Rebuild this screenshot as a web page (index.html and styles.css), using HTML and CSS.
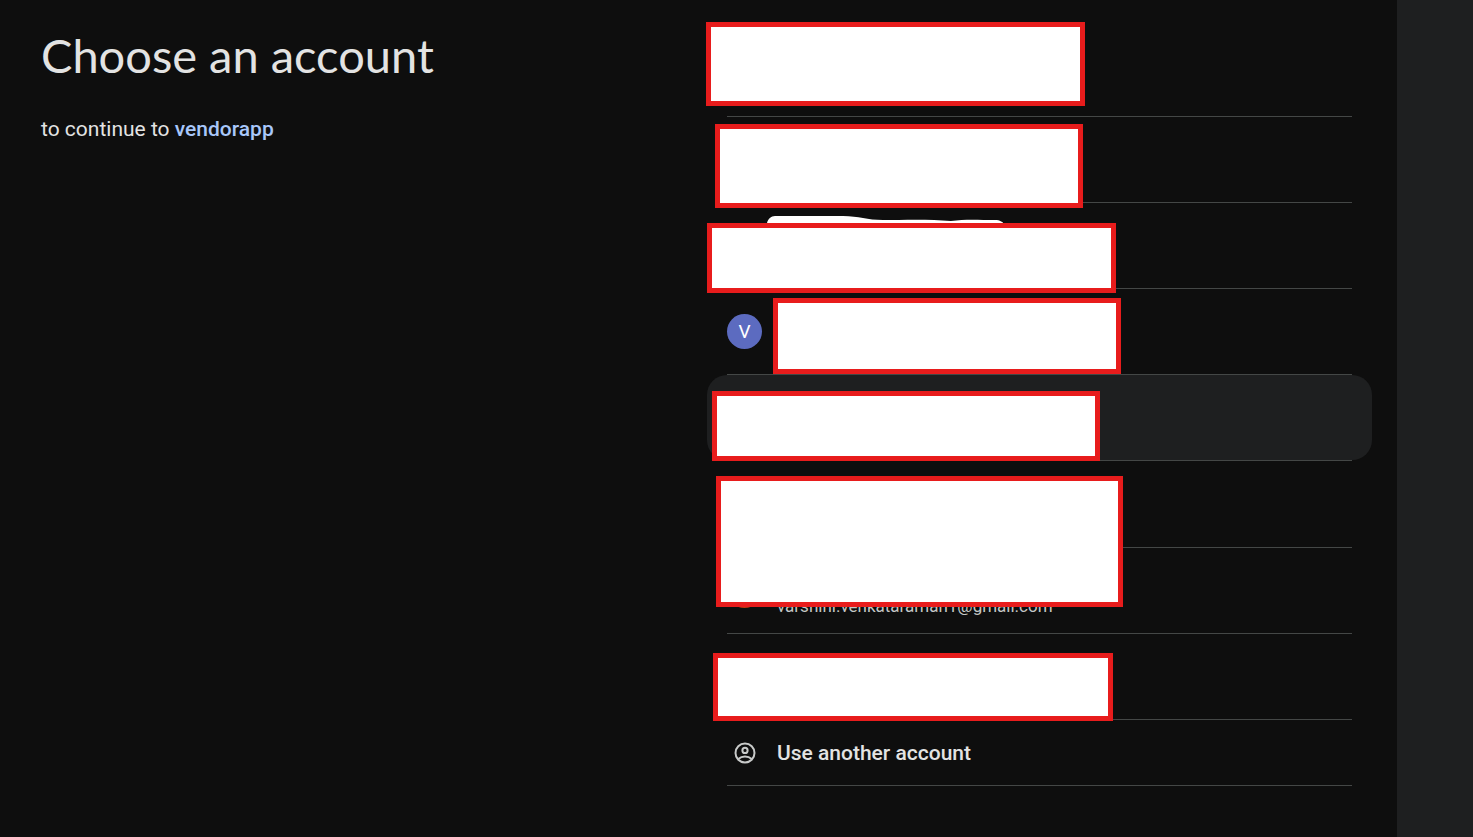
FILE: index.html
```html
<!DOCTYPE html>
<html lang="en">
<head>
<meta charset="utf-8">
<meta name="viewport" content="width=device-width, initial-scale=1">
<title>Choose an account</title>
<link rel="stylesheet" href="styles.css">
</head>
<body>
<main class="panel">
  <header class="intro">
    <h1 class="title">Choose an account</h1>
    <p class="subtitle">to continue to <a class="app-link" href="#">vendorapp</a></p>
  </header>
  <ul class="accounts">
    <li class="row"><button class="account" type="button"><span class="cover cover-1"></span></button></li>
    <li class="row"><button class="account" type="button"><span class="cover cover-2"></span></button></li>
    <li class="row"><button class="account" type="button">
      <svg class="brush" viewBox="0 0 238 20" aria-hidden="true"><path fill="#fff" d="M0 20V7C1 3 4 0 8 0H76C92 0 100 4 116 4C136 4 162 3 184 5C198 3 212 4 228 4C233 4 236 6 238 9V20Z"/></svg>
      <span class="cover cover-3"></span></button></li>
    <li class="row"><button class="account" type="button"><span class="avatar avatar-indigo">V</span><span class="cover cover-4"></span></button></li>
    <li class="row row-active"><button class="account" type="button"><span class="cover cover-5"></span></button></li>
    <li class="row row-tall"><button class="account" type="button"><span class="cover cover-6"></span></button></li>
    <li class="row"><button class="account" type="button"><span class="avatar avatar-orange"></span><span class="email">varshini.venkataraman1@gmail.com</span></button></li>
    <li class="row"><button class="account" type="button"><span class="cover cover-7"></span></button></li>
    <li class="row row-short"><button class="account" type="button">
      <span class="icon-slot"><svg class="icon" viewBox="0 0 22 22" fill="none" stroke="#c8cac9" stroke-width="2" aria-hidden="true"><circle cx="11" cy="11" r="9.5"/><circle cx="11" cy="8.4" r="2.6"/><path d="M4.3 17C6.2 15.3 8.4 14.5 11 14.5S15.8 15.3 17.7 17"/></svg></span>
      <span class="label">Use another account</span></button></li>
  </ul>
</main>
<aside class="gutter"></aside>
</body>
</html>
```
FILE: styles.css
```css
* {
  box-sizing: border-box;
}

body {
  margin: 0;
  min-height: 100vh;
  display: flex;
  background: #0e0e0e;
  color: #e3e3e3;
  font-family: "Lato", "Liberation Sans", sans-serif;
}

.panel {
  flex: 1;
  display: grid;
  grid-template-columns: 1fr 1fr;
  column-gap: 61px;
  padding: 31px 45px 30px 41px;
}

.gutter {
  width: 76px;
  background: #1e1f20;
}

.title {
  margin: 0;
  font-size: 47px;
  font-weight: 400;
  line-height: 48px;
}

.subtitle {
  margin: 37px 0 0;
  font-family: "Roboto", sans-serif;
  font-size: 21px;
  line-height: 26px;
}

.app-link {
  color: #a8c7fa;
  font-weight: 500;
  text-decoration: none;
}

.accounts {
  margin: 0;
  padding: 0;
  list-style: none;
}

.row {
  position: relative;
  height: 86px;
  border-bottom: 1px solid #444746;
}

.row-tall {
  height: 87px;
}

.row-short {
  height: 66px;
}

.row-active::before {
  content: "";
  position: absolute;
  inset: 0 -20px;
  border-radius: 20px;
  background: #1e1f20;
}

.account {
  display: flex;
  align-items: center;
  gap: 15px;
  width: 100%;
  height: 100%;
  padding: 0;
  border: 0;
  background: none;
  color: inherit;
  font-family: "Roboto", sans-serif;
  text-align: left;
  cursor: pointer;
}

.avatar {
  display: flex;
  align-items: center;
  justify-content: center;
  width: 35px;
  height: 35px;
  border-radius: 50%;
  color: #fff;
  font-size: 19px;
}

.avatar-indigo {
  background: #5c6bc0;
}

.avatar-orange {
  background: #bf360c;
}

.email {
  padding-top: 31px;
  color: #c4c7c5;
  font-size: 17px;
  line-height: 22px;
}

.icon-slot {
  display: flex;
  justify-content: center;
  width: 35px;
}

.icon {
  width: 22px;
  height: 22px;
}

.label {
  font-size: 21px;
  font-weight: 500;
  line-height: 26px;
}

.brush {
  position: absolute;
  top: 13px;
  left: 40px;
  width: 238px;
  height: 20px;
}

.cover {
  position: absolute;
  z-index: 1;
  border: 5px solid #e81c1c;
  background: #fff;
}

.cover-1 {
  top: -9px;
  left: -21px;
  width: 379px;
  height: 84px;
}

.cover-2 {
  top: 7px;
  left: -12px;
  width: 368px;
  height: 84px;
}

.cover-3 {
  top: 20px;
  left: -20px;
  width: 409px;
  height: 70px;
}

.cover-4 {
  top: 9px;
  left: 46px;
  width: 348px;
  height: 76px;
}

.cover-5 {
  top: 16px;
  left: -15px;
  width: 388px;
  height: 70px;
}

.cover-6 {
  top: 15px;
  left: -11px;
  width: 407px;
  height: 131px;
}

.cover-7 {
  top: 19px;
  left: -14px;
  width: 400px;
  height: 68px;
}
```
